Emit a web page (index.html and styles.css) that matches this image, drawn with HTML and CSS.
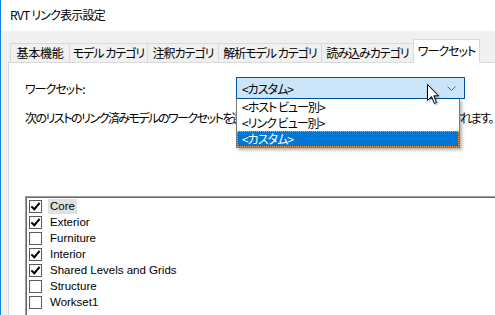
FILE: index.html
```html
<!DOCTYPE html>
<html lang="ja">
<head>
    <meta charset="UTF-8">
    <title>RVT リンク表示設定</title>
    <link rel="stylesheet" href="styles.css">
</head>
<body>
    <div class="window">
        <div class="titlebar">RVT リンク表示設定</div>

        <div class="client">
            <div class="tabs">
                <div class="tab tab-general">基本機能</div>
                <div class="tab tab-model">モデル カテゴリ</div>
                <div class="tab tab-annot">注釈カテゴリ</div>
                <div class="tab tab-analytic">解析モデル カテゴリ</div>
                <div class="tab tab-import">読み込みカテゴリ</div>
                <div class="tab tab-worksets active">ワークセット</div>
            </div>

            <div class="panel">
                <div class="ws-row">
                    <span class="ws-label">ワークセット:</span>
                    <div class="combo">
                        <span class="combo-value">&lt;カスタム&gt;</span>
                        <svg class="chevron" width="9" height="5" viewBox="0 0 9 5">
                            <path d="M0.5 0.5 L4.5 4.5 L8.5 0.5" fill="none" stroke="#606060" stroke-width="1"/>
                        </svg>
                        <ul class="dropdown">
                            <li>&lt;ホスト ビュー別&gt;</li>
                            <li>&lt;リンク ビュー別&gt;</li>
                            <li class="selected">&lt;カスタム&gt;</li>
                        </ul>
                        <!-- mouse pointer -->
                        <svg class="pointer" width="13" height="21" viewBox="0 0 13 21">
                            <path d="M0.5 0.5 L0.5 16.5 L4.5 12.5 L7.5 19.5 L9.5 18.5 L6.8 11.8 L11.5 11.8 Z" fill="#fff" stroke="#000" stroke-width="1"/>
                        </svg>
                    </div>
                </div>

                <p class="hint">次のリストのリンク済みモデルのワークセットを選択すると、それらがホスト モデルのビューに表示されます。</p>

                <div class="listbox">
                    <div class="item"><span class="check on"></span><span class="name focus">Core</span></div>
                    <div class="item"><span class="check on"></span><span class="name">Exterior</span></div>
                    <div class="item"><span class="check"></span><span class="name">Furniture</span></div>
                    <div class="item"><span class="check on"></span><span class="name">Interior</span></div>
                    <div class="item"><span class="check on"></span><span class="name">Shared Levels and Grids</span></div>
                    <div class="item"><span class="check"></span><span class="name">Structure</span></div>
                    <div class="item"><span class="check"></span><span class="name">Workset1</span></div>
                </div>
            </div>
        </div>
    </div>
</body>
</html>
```

FILE: styles.css
```css
body {
    margin: 0;
    padding: 0;
    overflow: hidden;
    background-color: #fff;
    font-family: "Noto Sans CJK JP", "Liberation Sans", sans-serif;
    font-size: 12px;
    font-feature-settings: "palt";
    letter-spacing: -1px;
    color: #000;
}

.window {
    width: 540px;
    height: 340px;
    border-left: 1px solid #1883d7;
    display: flex;
    flex-direction: column;
}

.titlebar {
    height: 31px;
    line-height: 30px;
    padding-left: 9px;
    letter-spacing: -0.8px;
    background-color: #fff;
}

.client {
    flex: 1;
    display: flex;
    flex-direction: column;
    background-color: #f0f0f0;
    padding: 8px 0 0 7px;
}

.tabs {
    display: flex;
    align-items: flex-end;
    margin: 0 0 -1px 2px;
    position: relative;
    z-index: 1;
}

.tab {
    box-sizing: border-box;
    height: 19px;
    line-height: 18px;
    margin: 0 0 1px -1px;
    border: 1px solid #d9d9d9;
    border-bottom: none;
    background-color: #f0f0f0;
    text-align: center;
    white-space: nowrap;
}

.tab:first-child {
    margin-left: 0;
}

.tab-general { width: 60px; letter-spacing: -0.3px; }
.tab-model { width: 79px; }
.tab-annot { width: 72px; }
.tab-analytic { width: 104px; }
.tab-import { width: 93px; }
.tab-worksets { width: 67px; }

.tab.active {
    height: 24px;
    line-height: 22px;
    margin-bottom: 0;
    background-color: #fff;
}

.panel {
    flex: 1;
    background-color: #fff;
    border: 1px solid #d9d9d9;
    padding: 14px 0 0 16px;
}

.ws-row {
    display: flex;
    align-items: center;
}

.ws-label {
    width: 211px;
}

.combo {
    position: relative;
    width: 222px;
    height: 20px;
    border: 1px solid #005499;
    background-color: #cce4f7;
    display: flex;
    align-items: center;
    padding-left: 5px;
    box-sizing: content-box;
}

.combo-value {
    flex: 1;
}

.chevron {
    margin-right: 8px;
}

.dropdown {
    position: absolute;
    top: 21px;
    left: -1px;
    width: 222px;
    margin: 0;
    padding: 0;
    list-style: none;
    background-color: #fff;
    border: 1px solid #7a7a7a;
    border-top: none;
    box-shadow: 2px 2px 3px rgba(0, 0, 0, 0.3);
    z-index: 5;
}

.dropdown li {
    height: 16px;
    line-height: 15px;
    padding-left: 5px;
    box-sizing: border-box;
}

.dropdown li.selected {
    background-color: #0078d7;
    color: #fff;
    border: 1px dotted #ff9a3c;
    padding-left: 4px;
    line-height: 13px;
}

.pointer {
    position: absolute;
    left: 190px;
    top: 6px;
    z-index: 6;
    filter: drop-shadow(1px 1px 1px rgba(0, 0, 0, 0.35));
}

.hint {
    margin: 10px 0 0 0;
    white-space: nowrap;
    letter-spacing: -1.5px;
}

.listbox {
    margin-top: 70px;
    height: 140px;
    border: 1px solid #a0a0a0;
    box-shadow: inset 1px 1px 0 #696969;
    padding: 1px 0 0 3px;
    font-family: "Liberation Sans", Arial, sans-serif;
    font-size: 11.5px;
    font-feature-settings: normal;
    letter-spacing: 0;
}

.item {
    height: 16px;
    display: flex;
    align-items: center;
}

.check {
    width: 11px;
    height: 11px;
    border: 1px solid #5a5a5a;
    background-color: #fff;
    margin-right: 6px;
    position: relative;
}

.check.on::after {
    content: "";
    position: absolute;
    left: 3px;
    top: 0px;
    width: 3px;
    height: 7px;
    border: solid #000;
    border-width: 0 2px 2px 0;
    transform: rotate(40deg);
}

.name {
    padding: 1px 2px;
    line-height: 13px;
}

.name.focus {
    background-color: #e0e0e0;
}
```
